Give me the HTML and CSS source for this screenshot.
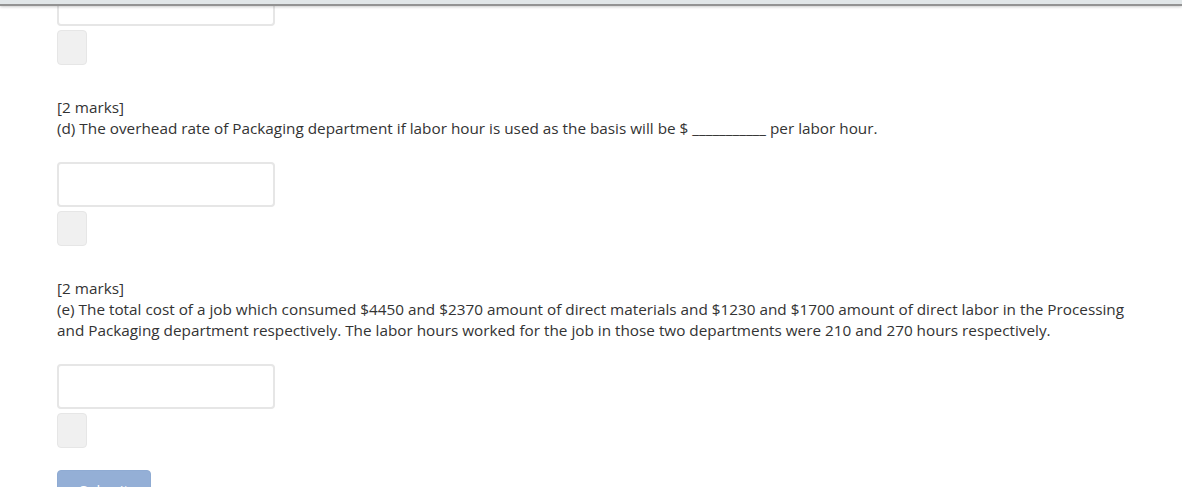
FILE: index.html
```html
<!DOCTYPE html>
<html lang="en">
<head>
    <meta charset="UTF-8">
    <meta name="viewport" content="width=device-width, initial-scale=1.0">
    <title>Quiz</title>
    <link rel="stylesheet" href="styles.css">
</head>
<body>
    <div class="topbar"></div>

    <div class="page">
        <div class="answer">
            <input type="text" class="field">
            <button class="check"></button>
        </div>

        <div class="question">
            <p>[2 marks]<br>
            (d) The overhead rate of Packaging department if labor hour is used as the basis will be $ ___________ per labor hour.</p>
        </div>

        <div class="answer">
            <input type="text" class="field">
            <button class="check"></button>
        </div>

        <div class="question">
            <p>[2 marks]<br>
            (e) The total cost of a job which consumed $4450 and $2370 amount of direct materials and $1230 and $1700 amount of direct labor in the Processing and Packaging department respectively. The labor hours worked for the job in those two departments were 210 and 270 hours respectively.</p>
        </div>

        <div class="answer">
            <input type="text" class="field">
            <button class="check"></button>
        </div>

        <div class="submit-row">
            <button class="submit" disabled>Submit</button>
            <span class="note">You have not yet filled in all the answers.</span>
            <span class="logo">
                <svg width="16" height="12" viewBox="0 0 16 12"><rect x="0" y="0" width="14" height="3" fill="#1f78c8"/><rect x="5" y="0" width="4" height="12" fill="#1f78c8"/></svg>
            </span>
        </div>
    </div>
</body>
</html>
```

FILE: styles.css
```css
html, body {
    margin: 0;
    height: 100%;
    overflow: hidden;
}
body {
    font-family: "Open Sans", "Noto Sans", sans-serif;
    font-size: 15.3px;
    color: #333;
    background-color: #fff;
}
.topbar {
    position: fixed;
    top: 0;
    left: 0;
    right: 0;
    height: 4px;
    background-color: #e1e6e8;
    border-bottom: 2px solid #939393;
    box-shadow: 0 1px 3px rgba(0, 0, 0, 0.2);
    z-index: 10;
}
.page {
    margin-top: -19px;
    padding-left: 57px;
    width: 1085px;
}
.answer {
    display: flex;
    flex-direction: column;
    align-items: flex-start;
    gap: 4px;
}
.field {
    box-sizing: border-box;
    width: 218px;
    height: 45px;
    margin: 0;
    border: 2px solid #e6e6e6;
    border-radius: 4px;
    background-color: #fff;
}
.check {
    box-sizing: border-box;
    width: 30px;
    height: 35px;
    padding: 0;
    border: 1px solid #e6e6e6;
    border-radius: 4px;
    background-color: #f0f0f0;
}
.question p {
    margin: 32px 0 23px;
    line-height: 21px;
}
.submit-row {
    display: flex;
    align-items: flex-start;
    margin-top: 22px;
}
.submit {
    width: 94px;
    height: 40px;
    border: 1px solid #8fabd3;
    border-radius: 4px;
    background-color: #94afd6;
    color: #fff;
    font-family: "Open Sans", sans-serif;
    font-size: 15px;
}
.note {
    margin: 17px 0 0 12px;
    color: #666;
    font-size: 14px;
}
.logo {
    margin: 14px 0 0 auto;
    padding-right: 10px;
}
```
